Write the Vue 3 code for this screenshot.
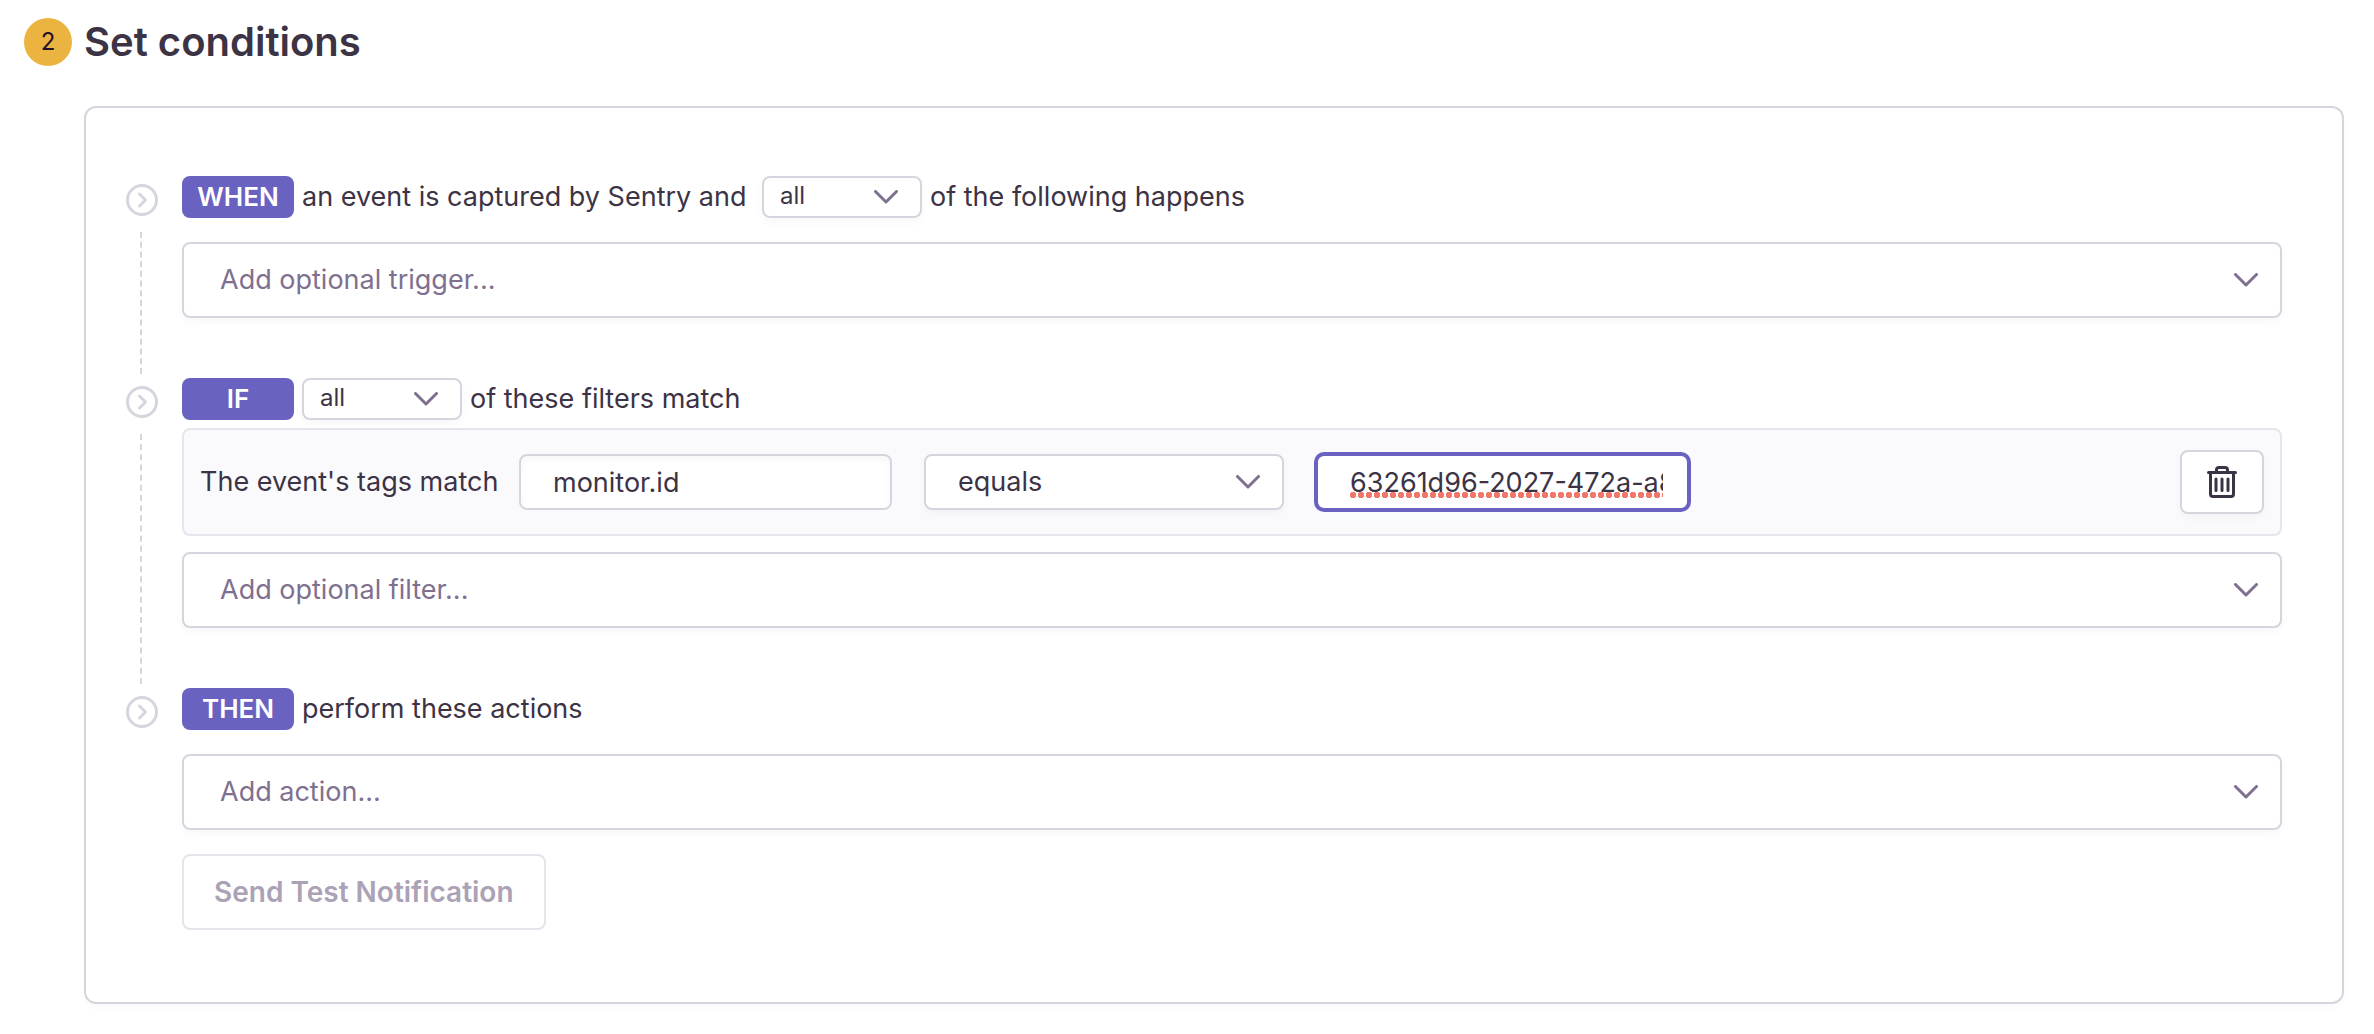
<script setup>
import { ref } from 'vue'

const triggerMatch = ref('all')
const filterMatch = ref('all')
const newTrigger = ref('')
const newFilter = ref('')
const newAction = ref('')
const tagKey = ref('monitor.id')
const tagMatch = ref('equals')
const tagValue = ref('63261d96-2027-472a-a8')
</script>

<template>
  <main class="page">
    <header class="heading">
      <span class="number">2</span>
      <h2 class="title">Set conditions</h2>
    </header>

    <form class="panel" @submit.prevent>
      <section class="step">
        <div class="rail">
          <svg class="marker" viewBox="0 0 32 32" aria-hidden="true">
            <circle cx="16" cy="16" r="14.5" />
            <path d="M13.5 10 19.5 16l-6 6" />
          </svg>
          <span class="line"></span>
        </div>
        <div class="body">
          <div class="sentence">
            <span class="badge">WHEN</span>
            <label class="lead" for="trigger-match">an event is captured by Sentry and</label>
            <span class="picker compact">
              <select id="trigger-match" v-model="triggerMatch">
                <option>all</option>
                <option>any</option>
              </select>
              <svg class="chevron" viewBox="0 0 24 14" aria-hidden="true"><path d="M1.5 1.5 12 12 22.5 1.5" /></svg>
            </span>
            <span>of the following happens</span>
          </div>
          <span class="picker wide spaced">
            <select v-model="newTrigger" aria-label="Add optional trigger" class="empty">
              <option value="">Add optional trigger...</option>
            </select>
            <svg class="chevron" viewBox="0 0 24 14" aria-hidden="true"><path d="M1.5 1.5 12 12 22.5 1.5" /></svg>
          </span>
        </div>
      </section>

      <section class="step">
        <div class="rail">
          <svg class="marker" viewBox="0 0 32 32" aria-hidden="true">
            <circle cx="16" cy="16" r="14.5" />
            <path d="M13.5 10 19.5 16l-6 6" />
          </svg>
          <span class="line"></span>
        </div>
        <div class="body">
          <div class="sentence">
            <span class="badge">IF</span>
            <span class="picker compact">
              <select id="filter-match" v-model="filterMatch">
                <option>all</option>
                <option>any</option>
                <option>none</option>
              </select>
              <svg class="chevron" viewBox="0 0 24 14" aria-hidden="true"><path d="M1.5 1.5 12 12 22.5 1.5" /></svg>
            </span>
            <label for="filter-match">of these filters match</label>
          </div>
          <div class="rule">
            <label class="rule-label" for="tag-key">The event's tags match</label>
            <div class="fields">
              <input id="tag-key" v-model="tagKey" class="field" type="text" />
              <span class="picker medium">
                <select v-model="tagMatch" aria-label="Match type">
                  <option>equals</option>
                  <option>contains</option>
                </select>
                <svg class="chevron" viewBox="0 0 24 14" aria-hidden="true"><path d="M1.5 1.5 12 12 22.5 1.5" /></svg>
              </span>
              <span class="value">
                <input v-model="tagValue" class="field active" type="text" aria-label="Tag value" />
                <span class="misspelled"></span>
              </span>
            </div>
            <button class="remove" type="button" aria-label="Delete filter">
              <svg viewBox="0 0 30 32" aria-hidden="true">
                <path d="M1.5 6.5h27" />
                <path d="M3.5 6.5V28q0 2.5 2.5 2.5h18q2.5 0 2.5-2.5V6.5" />
                <path d="M9.5 6V4q0-2.5 2.5-2.5h6q2.5 0 2.5 2.5v2" />
                <path d="M9 13v11.5M15 13v11.5M21 13v11.5" />
              </svg>
            </button>
          </div>
          <span class="picker wide">
            <select v-model="newFilter" aria-label="Add optional filter" class="empty">
              <option value="">Add optional filter...</option>
            </select>
            <svg class="chevron" viewBox="0 0 24 14" aria-hidden="true"><path d="M1.5 1.5 12 12 22.5 1.5" /></svg>
          </span>
        </div>
      </section>

      <section class="step">
        <div class="rail">
          <svg class="marker" viewBox="0 0 32 32" aria-hidden="true">
            <circle cx="16" cy="16" r="14.5" />
            <path d="M13.5 10 19.5 16l-6 6" />
          </svg>
        </div>
        <div class="body">
          <div class="sentence">
            <span class="badge">THEN</span>
            <span>perform these actions</span>
          </div>
          <span class="picker wide spaced">
            <select v-model="newAction" aria-label="Add action" class="empty">
              <option value="">Add action...</option>
            </select>
            <svg class="chevron" viewBox="0 0 24 14" aria-hidden="true"><path d="M1.5 1.5 12 12 22.5 1.5" /></svg>
          </span>
          <button class="test" type="button" disabled>Send Test Notification</button>
        </div>
      </section>
    </form>
  </main>
</template>

<style>
body {
  margin: 0;
  background: #fff;
}
</style>

<style scoped>
.page {
  box-sizing: border-box;
  padding: 18px 30px 30px 24px;
  font-family: Inter, "Liberation Sans", sans-serif;
  font-size: 27px;
  line-height: 36px;
  color: #3c3345;
}
.page * {
  box-sizing: border-box;
}
.heading {
  display: flex;
  align-items: center;
  gap: 12px;
}
.number {
  width: 48px;
  height: 48px;
  border-radius: 50%;
  background: #ebb340;
  color: #1d1127;
  font-size: 24px;
  line-height: 48px;
  text-align: center;
}
.title {
  margin: 0;
  font-size: 40px;
  font-weight: 600;
  line-height: 48px;
}
.panel {
  margin: 40px 0 0 60px;
  padding: 68px 60px 72px 40px;
  border: 2px solid #d6d4de;
  border-radius: 12px;
  box-shadow: 0 4px 8px rgba(43, 34, 51, 0.02);
}
.step {
  display: flex;
  gap: 24px;
}
.step + .step {
  margin-top: 60px;
}
.rail {
  display: flex;
  flex: none;
  flex-direction: column;
  width: 32px;
  padding-top: 8px;
}
.marker {
  display: block;
  width: 32px;
  height: 32px;
  fill: none;
  stroke: #d6d4de;
  stroke-width: 3;
  stroke-linecap: round;
  stroke-linejoin: round;
}
.line {
  flex: 1;
  align-self: center;
  margin: 16px 2px -56px 0;
  border-left: 2px dashed #d6d4de;
}
.body {
  display: flex;
  flex: 1;
  flex-direction: column;
  min-width: 0;
}
.sentence {
  display: flex;
  align-items: center;
  gap: 8px;
  height: 42px;
}
.badge {
  width: 112px;
  height: 42px;
  border-radius: 8px;
  background: #6a62c0;
  color: #fff;
  font-size: 26px;
  font-weight: 600;
  line-height: 42px;
  text-align: center;
}
.lead {
  min-width: 452px;
}
.picker {
  position: relative;
  display: block;
}
.picker select {
  display: block;
  width: 100%;
  height: 100%;
  margin: 0;
  border: 2px solid #d6d4de;
  border-radius: 8px;
  background: #fff;
  box-shadow: 0 4px 8px rgba(43, 34, 51, 0.03);
  color: inherit;
  font: inherit;
  appearance: none;
}
.chevron {
  position: absolute;
  top: 50%;
  right: 24px;
  width: 24px;
  height: 14px;
  margin-top: -7px;
  fill: none;
  stroke: #80708f;
  stroke-width: 3;
  stroke-linecap: round;
  stroke-linejoin: round;
  pointer-events: none;
}
.compact {
  width: 160px;
  height: 42px;
}
.picker.compact select {
  padding: 0 16px 2px;
  font-size: 24px;
}
.medium {
  width: 360px;
  height: 56px;
}
.medium select {
  padding: 0 32px;
}
.wide {
  height: 76px;
}
.wide select {
  padding: 0 36px;
}
.picker .empty {
  color: #80708f;
}
.spaced {
  margin-top: 24px;
}
.rule {
  display: flex;
  align-items: center;
  height: 108px;
  margin: 8px 0 16px;
  padding: 0 16px;
  border: 2px solid #e6e4ec;
  border-radius: 8px;
  background: #fafafc;
}
.rule-label {
  min-width: 303px;
  margin-right: 16px;
}
.fields {
  display: flex;
  flex: 1;
  gap: 32px;
}
.field {
  display: block;
  width: 373px;
  height: 56px;
  margin: 0;
  padding: 0 24px 0 32px;
  border: 2px solid #d6d4de;
  border-radius: 8px;
  background: #fff;
  box-shadow: inset 0 4px 8px rgba(43, 34, 51, 0.03);
  color: inherit;
  font: inherit;
  outline: none;
}
.active {
  border-color: #6a62c0;
  box-shadow: 0 0 0 2px #6a62c0;
}
.value {
  position: relative;
}
.misspelled {
  position: absolute;
  right: 26px;
  bottom: 12px;
  left: 34px;
  height: 6px;
  background: radial-gradient(circle at 3px 3px, #f2776b 0 3px, transparent 3px) 0 0 / 8px 6px repeat-x;
  pointer-events: none;
}
.remove {
  display: flex;
  align-items: center;
  justify-content: center;
  width: 84px;
  height: 64px;
  padding: 0;
  border: 2px solid #d6d4de;
  border-radius: 8px;
  background: #fff;
  box-shadow: 0 4px 8px rgba(43, 34, 51, 0.03);
}
.remove svg {
  width: 30px;
  height: 32px;
  fill: none;
  stroke: #3c3345;
  stroke-width: 3;
  stroke-linecap: round;
}
.test {
  align-self: flex-start;
  height: 76px;
  margin-top: 24px;
  padding: 0 30px;
  border: 2px solid #e6e4ec;
  border-radius: 8px;
  background: #fff;
  color: #aba2b6;
  font-family: inherit;
  font-size: 28px;
  font-weight: 600;
}
</style>
